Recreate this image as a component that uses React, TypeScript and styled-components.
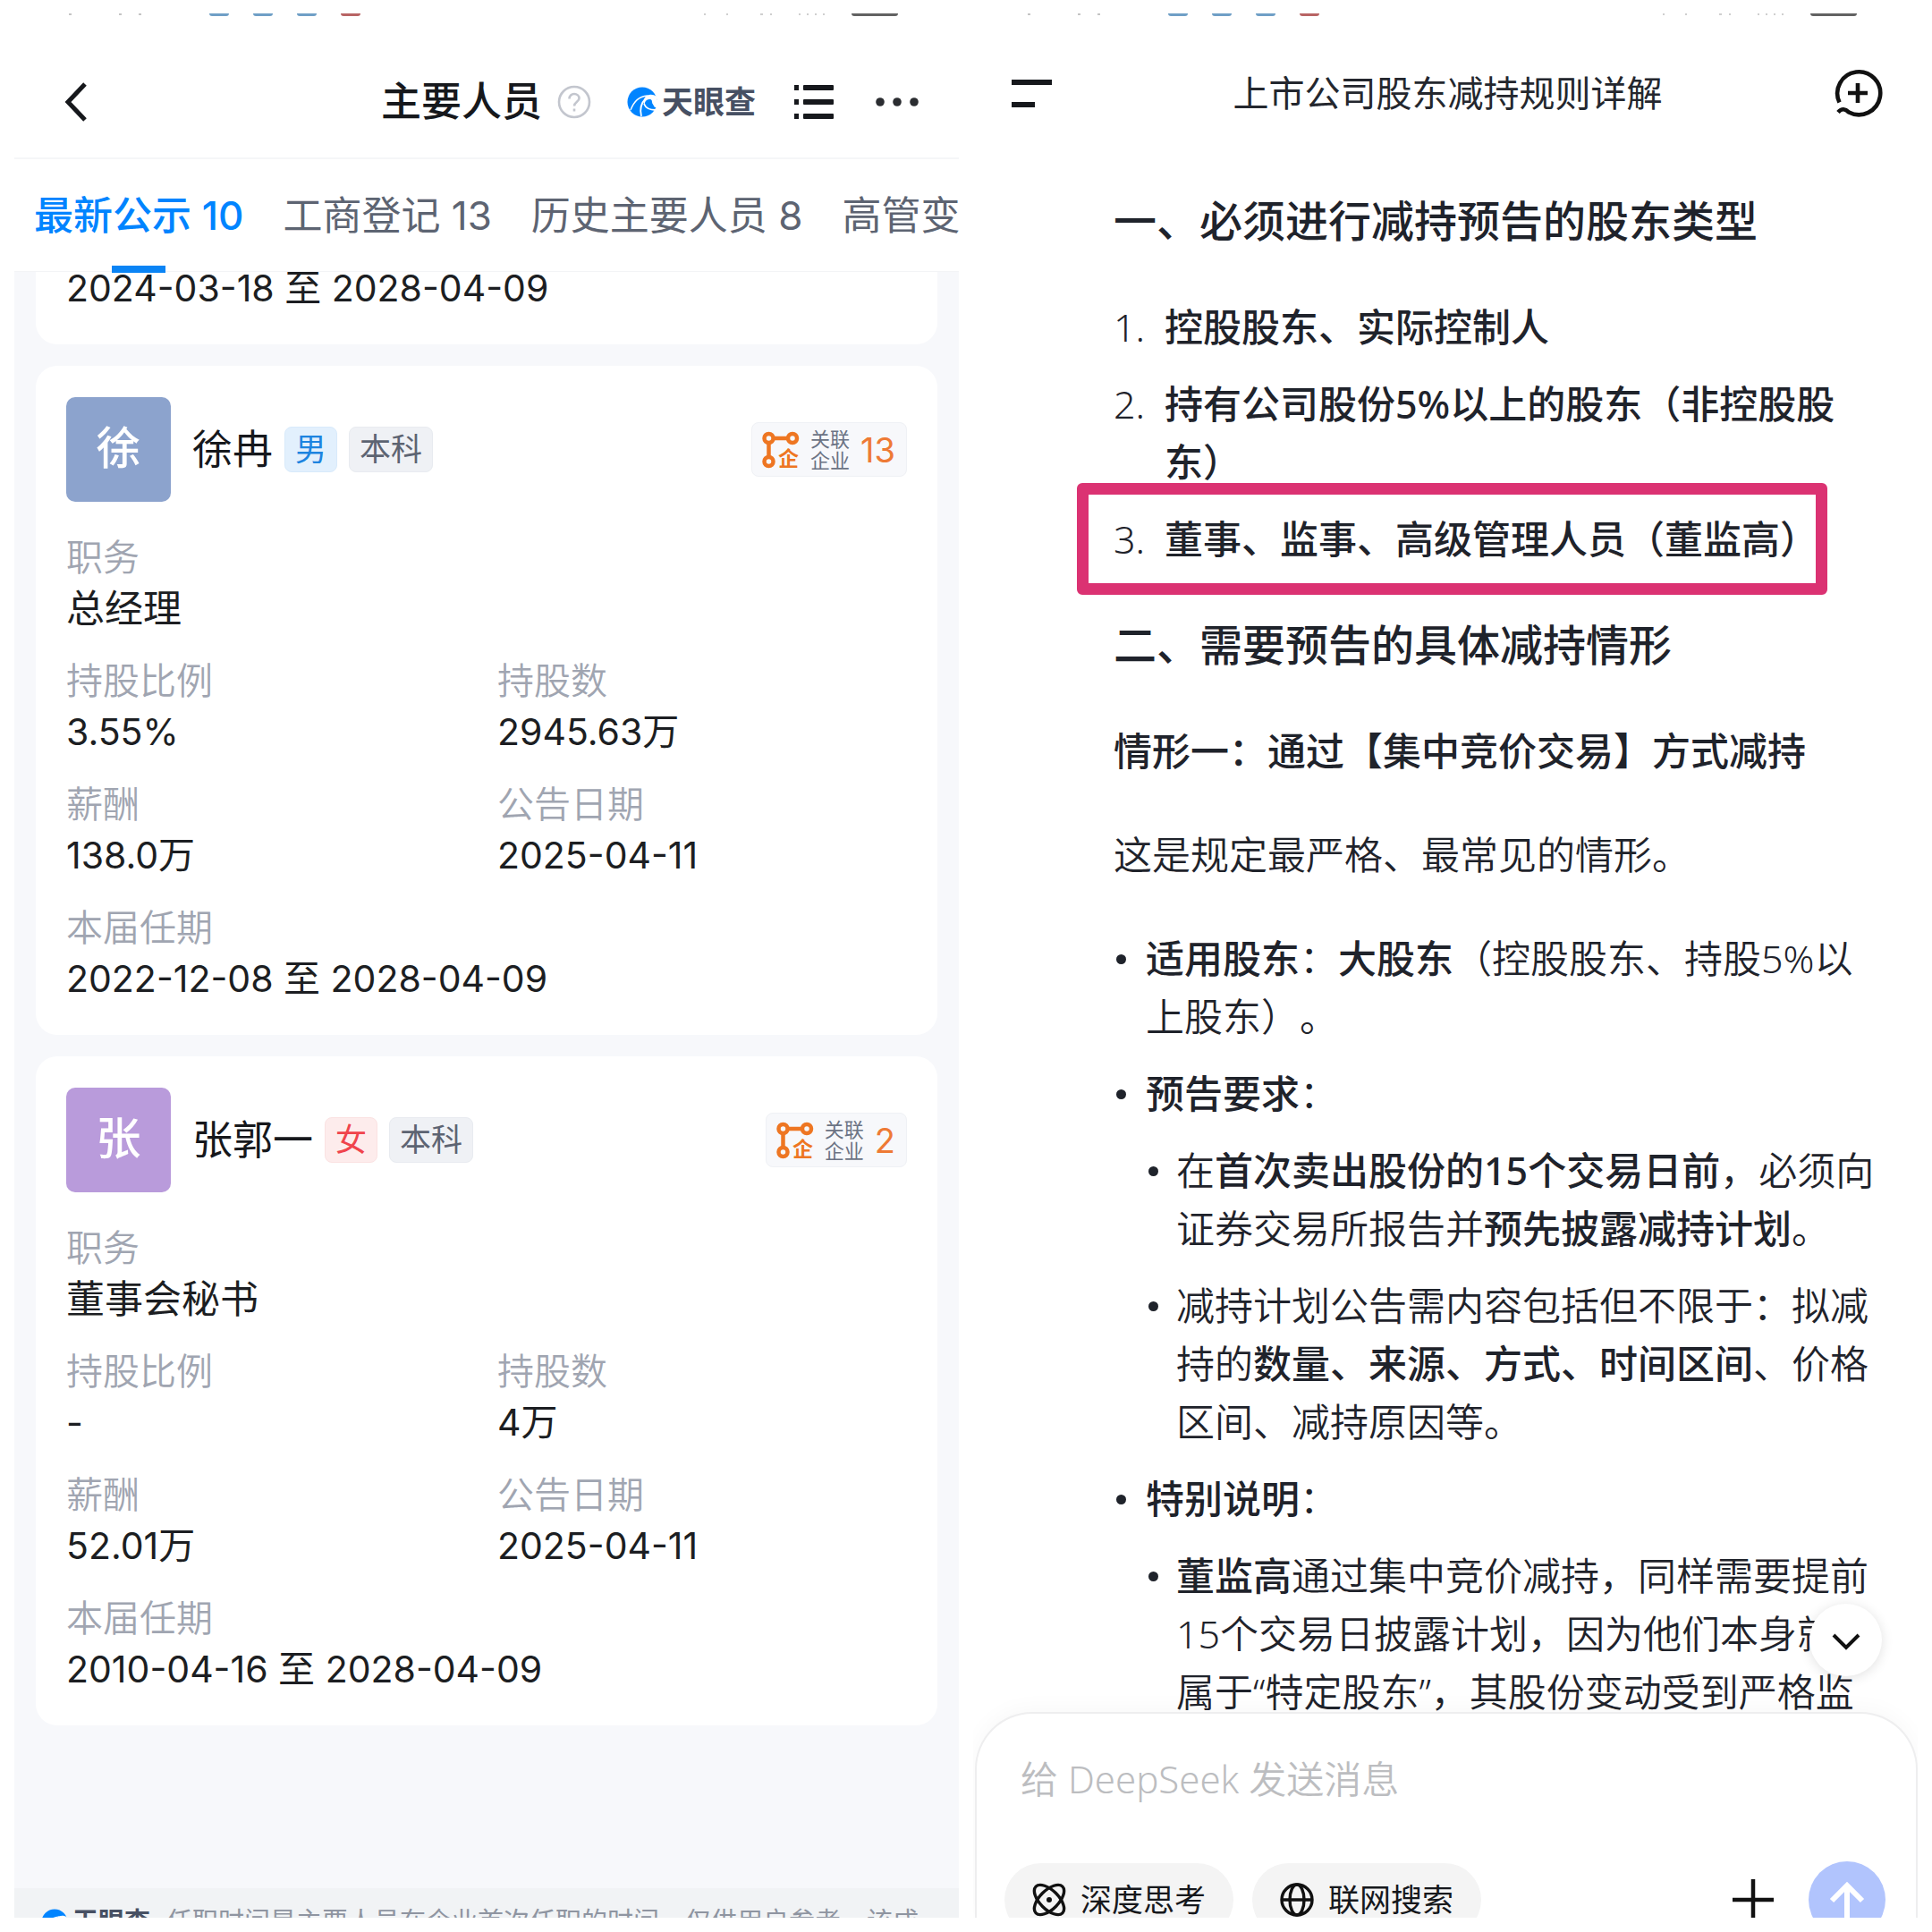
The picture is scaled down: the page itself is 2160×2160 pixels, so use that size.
import React from "react";
import styled, { createGlobalStyle, css } from "styled-components";

const GlobalStyle = createGlobalStyle`
  *, *::before, *::after { box-sizing: border-box; }
  body {
    margin: 0;
    background: #fff;
    color: #16181c;
    font-family: Inter, "Noto Sans CJK SC", "Liberation Sans", sans-serif;
    text-spacing-trim: space-all;
  }
  button, input { font: inherit; color: inherit; }
  button { padding: 0; border: 0; background: none; cursor: pointer; }
  h1, h2, h3, p, ol, ul, dl, dd { margin: 0; padding: 0; }
  ol, ul { list-style: none; }
  svg { display: block; flex: none; }
`;

const Page = styled.div`
  display: grid;
  grid-template-columns: minmax(0, 1fr) minmax(0, 1fr);
  gap: 16px;
  height: 100vh;
  padding: 15px 16px 16px;
`;

const Phone = styled.section`
  display: flex;
  flex-direction: column;
  min-height: 0;
  overflow: hidden;
  background: #fff;
`;

const ChatPhone = styled(Phone)`
  font-family: "Noto Sans", "Noto Sans CJK SC", "Liberation Sans", sans-serif;
`;

/* ---------- status bar ---------- */

const StatusBar = styled.div`
  display: flex;
  justify-content: space-between;
  height: 3px;
  padding: 0 68px 0 60px;
`;

const StatusIcons = styled.div`
  display: flex;
  gap: 27px;
`;

const StatusDash = styled.span<{ $color: string; $width?: number }>`
  width: ${(p) => p.$width ?? 22}px;
  height: 3px;
  border-radius: 0 0 3px 3px;
  background: ${(p) => p.$color};
`;

function PhoneStatus() {
  return (
    <StatusBar aria-hidden="true">
      <StatusIcons>
        <svg width="131" height="3" viewBox="0 0 131 3" fill="#c4c4c4">
          <path d="M1 0H4V2H1ZM57 0H60V2H57ZM79 0H82V2H79Z" />
        </svg>
        <StatusDash $color="#6f9fc6" />
        <StatusDash $color="#6f9fc6" />
        <StatusDash $color="#6f9fc6" />
        <StatusDash $color="#b86464" />
      </StatusIcons>
      <StatusIcons>
        <svg width="138" height="3" viewBox="0 0 138 3" fill="#cfcfcf">
          <path d="M0 0H2V2H0ZM25 0H27V2H25ZM63 0H66V2H63ZM74 0H76V2H74ZM106 0H108V2H106ZM115 0H117V2H115ZM124 0H126V2H124ZM133 0H135V2H133Z" />
        </svg>
        <StatusDash $color="#626262" $width={52} />
      </StatusIcons>
    </StatusBar>
  );
}

/* ---------- company app ---------- */

const CompanyHeader = styled.header`
  display: flex;
  align-items: center;
  height: 160px;
  padding: 34px 44px 0 56px;
  border-bottom: 2px solid #f5f6f8;
`;

const IconButton = styled.button`
  display: flex;
  align-items: center;
  justify-content: center;
  justify-self: start;
`;

const HeaderTitle = styled.h1`
  margin-left: auto;
  font-size: 45px;
  line-height: 60px;
  font-weight: 500;
`;

const HeaderTools = styled.div`
  display: flex;
  align-items: center;
  flex: none;
  width: 422px;
  padding-left: 17px;
`;

const Brand = styled.span<{ $small?: boolean }>`
  display: flex;
  align-items: center;
  gap: 5px;
  color: #475063;
  font-weight: 700;
  font-size: ${(p) => (p.$small ? 29 : 35)}px;
  line-height: 40px;
  margin-left: ${(p) => (p.$small ? 0 : 40)}px;
`;

const ListTool = styled(IconButton)`
  margin-left: 43px;
`;

const MoreTool = styled(IconButton)`
  margin-left: auto;
`;

const Tabs = styled.nav`
  position: relative;
  z-index: 1;
  display: flex;
  gap: 44px;
  height: 126px;
  padding: 0 22px;
  border-bottom: 1px solid #f3f4f6;
  background: #fff;
  white-space: nowrap;
`;

const Tab = styled.button<{ $active?: boolean }>`
  position: relative;
  flex: none;
  font-size: 44px;
  line-height: 60px;
  font-weight: ${(p) => (p.$active ? 500 : 400)};
  color: ${(p) => (p.$active ? "#0084ff" : "#5d6472")};
  ${(p) =>
    p.$active &&
    css`
      &::after {
        content: "";
        position: absolute;
        left: calc(50% - 30px);
        bottom: -2px;
        width: 60px;
        height: 8px;
        background: #0a84f5;
      }
    `}
`;

const PeopleList = styled.main`
  flex: 1;
  min-height: 0;
  display: flex;
  flex-direction: column;
  gap: 24px;
  padding: 0 24px;
  background: #f7f8fb;
`;

const Card = styled.article`
  flex: none;
  padding: 35px 34px 34px;
  border-radius: 24px;
  background: #fff;
`;

const ScrolledCard = styled(Card)`
  display: flex;
  align-items: flex-end;
  height: 81px;
  padding-top: 0;
  border-radius: 0 0 24px 24px;
`;

const PersonHead = styled.header`
  display: flex;
  align-items: center;
  gap: 13px;
  margin-bottom: 34px;
`;

const Avatar = styled.span<{ $color: string }>`
  width: 117px;
  height: 117px;
  margin-right: 11px;
  border-radius: 10px;
  background: ${(p) => p.$color};
  color: #fff;
  font-size: 50px;
  line-height: 114px;
  font-weight: 500;
  text-align: center;
`;

const PersonName = styled.h2`
  font-size: 45px;
  line-height: 60px;
  font-weight: 400;
`;

const tagTone = {
  blue: css`
    color: #1d84e0;
    background: #e2f0fd;
    border-color: #d8eafb;
  `,
  red: css`
    color: #f0444c;
    background: #fdecec;
    border-color: #fbe2e2;
  `,
  gray: css`
    color: #5d6472;
    background: #eff1f5;
    border-color: #e8ebf0;
  `,
};

const Tag = styled.span<{ $tone: keyof typeof tagTone }>`
  padding: 0 11px;
  border: 1px solid;
  border-radius: 8px;
  font-size: 35px;
  line-height: 49px;
  ${(p) => tagTone[p.$tone]}
`;

const Related = styled.button`
  display: flex;
  align-items: center;
  gap: 12px;
  height: 61px;
  margin-left: auto;
  padding: 0 12px 0 11px;
  border: 1px solid #eff1f5;
  border-radius: 8px;
  background: #f7f8fb;
`;

const RelatedLabel = styled.span`
  width: 44px;
  font-size: 22px;
  line-height: 24px;
  color: #6b7384;
  text-align: left;
`;

const RelatedCount = styled.span`
  font-size: 38px;
  line-height: 40px;
  color: #ee7a35;
`;

const Fields = styled.dl`
  display: grid;
  grid-template-columns: 1fr 1fr;
  gap: 24px;
`;

const Field = styled.div<{ $wide?: boolean }>`
  grid-column: ${(p) => (p.$wide ? "1 / -1" : "auto")};
`;

const FieldLabel = styled.dt`
  font-size: 41px;
  line-height: 57px;
  font-weight: 350;
  color: #a0a5b1;
`;

const FieldValue = styled.dd<{ $text?: boolean }>`
  font-size: ${(p) => (p.$text ? 43 : 41)}px;
  line-height: 57px;
  color: #1c1e22;
`;

const ScrolledValue = styled.p`
  font-size: 41px;
  line-height: 57px;
  color: #1c1e22;
`;

const Disclaimer = styled.footer`
  display: flex;
  flex: none;
  align-items: flex-start;
  gap: 18px;
  height: 33px;
  padding: 18px 30px 0;
  overflow: hidden;
  background: #f1f3f5;
  white-space: nowrap;
`;

const DisclaimerText = styled.p`
  font-size: 29px;
  line-height: 40px;
  color: #8f95a1;
`;

function SwirlLogo({ size }: { size: number }) {
  return (
    <svg width={size} height={size} viewBox="0 0 34 34" aria-hidden="true">
      <circle cx="17" cy="17" r="16.5" fill="#0084ff" />
      <path d="M33 11C29 8 23 8 20 12C18 15 18 19 20 22C19 18 21 14 25 14C28 14 28 16 28 18C31 17 33 17 34 18Z" fill="#fff" />
      <path d="M4 26C8 16 13 11 23 10" fill="none" stroke="#fff" strokeWidth="1.4" />
      <path d="M16 33C14 25 16 18 21 13" fill="none" stroke="#fff" strokeWidth="1.8" />
      <path d="M19 19C21 24 25 26 32 26" fill="none" stroke="#fff" strokeWidth="1.8" />
      <path d="M28 18L35 14V23H31Z" fill="#fff" />
    </svg>
  );
}

function RelationIcon() {
  return (
    <svg width="42" height="42" viewBox="0 0 42 42" aria-hidden="true">
      <g fill="none" stroke="#ee7622" strokeWidth="4.5">
        <circle cx="7.500" cy="8" r="5" />
        <circle cx="34" cy="8" r="5" />
        <circle cx="7.500" cy="34" r="5" />
        <path d="M13 8H29M7.500 13V29" />
      </g>
      <text x="18" y="39" fontSize="23" fontWeight="700" fill="#ee7622">企</text>
    </svg>
  );
}

type Person = {
  name: string;
  color: string;
  sex: string;
  degree: string;
  related: string;
  job: string;
  ratio: string;
  shares: string;
  salary: string;
  date: string;
  term: string;
};

const people: Person[] = [
  {
    name: "徐冉", color: "#8ca3cd", sex: "男", degree: "本科", related: "13", job: "总经理",
    ratio: "3.55%", shares: "2945.63万", salary: "138.0万", date: "2025-04-11", term: "2022-12-08 至 2028-04-09",
  },
  {
    name: "张郭一", color: "#b99bdb", sex: "女", degree: "本科", related: "2", job: "董事会秘书",
    ratio: "-", shares: "4万", salary: "52.01万", date: "2025-04-11", term: "2010-04-16 至 2028-04-09",
  },
];

function PersonCard({ person }: { person: Person }) {
  return (
    <Card>
      <PersonHead>
        <Avatar $color={person.color}>{person.name[0]}</Avatar>
        <PersonName>{person.name}</PersonName>
        <Tag $tone={person.sex === "男" ? "blue" : "red"}>{person.sex}</Tag>
        <Tag $tone="gray">{person.degree}</Tag>
        <Related type="button">
          <RelationIcon />
          <RelatedLabel>关联企业</RelatedLabel>
          <RelatedCount>{person.related}</RelatedCount>
        </Related>
      </PersonHead>
      <Fields>
        <Field $wide>
          <FieldLabel>职务</FieldLabel>
          <FieldValue $text>{person.job}</FieldValue>
        </Field>
        <Field>
          <FieldLabel>持股比例</FieldLabel>
          <FieldValue>{person.ratio}</FieldValue>
        </Field>
        <Field>
          <FieldLabel>持股数</FieldLabel>
          <FieldValue>{person.shares}</FieldValue>
        </Field>
        <Field>
          <FieldLabel>薪酬</FieldLabel>
          <FieldValue>{person.salary}</FieldValue>
        </Field>
        <Field>
          <FieldLabel>公告日期</FieldLabel>
          <FieldValue>{person.date}</FieldValue>
        </Field>
        <Field $wide>
          <FieldLabel>本届任期</FieldLabel>
          <FieldValue>{person.term}</FieldValue>
        </Field>
      </Fields>
    </Card>
  );
}

function CompanyApp() {
  return (
    <Phone>
      <PhoneStatus />
      <CompanyHeader>
        <IconButton type="button" aria-label="返回">
          <svg width="26" height="46" viewBox="0 0 26 46" fill="none" stroke="#16181c" strokeWidth="5">
            <path d="M23 3L4 23L23 43" />
          </svg>
        </IconButton>
        <HeaderTitle>主要人员</HeaderTitle>
        <HeaderTools>
          <IconButton type="button" aria-label="说明">
            <svg width="38" height="38" viewBox="0 0 38 38" fill="none" stroke="#c3c6ce" strokeWidth="2.6">
              <circle cx="19" cy="19" r="17" />
              <path d="M13.5 15.5C13.5 12 16 10 19 10S24.500 12 24.500 15C24.500 18.500 19 19 19 23.500" />
              <path d="M19 26.500V29.500" />
            </svg>
          </IconButton>
          <Brand>
            <SwirlLogo size={34} />
            天眼查
          </Brand>
          <ListTool type="button" aria-label="目录">
            <svg width="44" height="40" viewBox="0 0 44 40" fill="#16181c">
              <path d="M0 1H5V7H0ZM0 17H5V23H0ZM0 33H5V39H0Z" />
              <rect x="10" y="1" width="34" height="6" rx="1" />
              <rect x="10" y="17" width="34" height="6" rx="1" />
              <rect x="10" y="33" width="34" height="6" rx="1" />
            </svg>
          </ListTool>
          <MoreTool type="button" aria-label="更多">
            <svg width="50" height="12" viewBox="0 0 50 12" fill="#2b2d31">
              <circle cx="6" cy="6" r="4.800" />
              <circle cx="25" cy="6" r="4.800" />
              <circle cx="44" cy="6" r="4.800" />
            </svg>
          </MoreTool>
        </HeaderTools>
      </CompanyHeader>
      <Tabs>
        <Tab type="button" $active>最新公示 10</Tab>
        <Tab type="button">工商登记 13</Tab>
        <Tab type="button">历史主要人员 8</Tab>
        <Tab type="button">高管变更</Tab>
      </Tabs>
      <PeopleList>
        <ScrolledCard>
          <ScrolledValue>2024-03-18 至 2028-04-09</ScrolledValue>
        </ScrolledCard>
        {people.map((person) => (
          <PersonCard key={person.name} person={person} />
        ))}
      </PeopleList>
      <Disclaimer>
        <Brand $small>
          <SwirlLogo size={30} />
          天眼查
        </Brand>
        <DisclaimerText>任职时间是主要人员在企业首次任职的时间，仅供用户参考，该成</DisclaimerText>
      </Disclaimer>
    </Phone>
  );
}

/* ---------- chat app ---------- */

const ChatHeader = styled.header`
  display: grid;
  grid-template-columns: minmax(0, 1fr) auto minmax(0, 1fr);
  align-items: center;
  height: 142px;
  padding: 30px 38px 0 43px;
`;

const ChatTitle = styled.h1`
  font-size: 40px;
  line-height: 60px;
  font-weight: 400;
  color: #24272e;
`;

const NewChat = styled(IconButton)`
  justify-self: end;
`;

const ChatBody = styled.main`
  position: relative;
  display: flex;
  flex: 1;
  min-height: 0;
`;

const Answer = styled.article`
  display: flex;
  flex: 1;
  flex-direction: column;
  gap: 51px;
  padding: 52px 44px 0 157px;
  overflow: hidden;
  font-size: 43px;
  line-height: 65px;
  font-weight: 350;
  color: #1f232b;
  strong { font-weight: 500; }
`;

const SectionTitle = styled.h2`
  font-size: 48px;
  line-height: 70px;
  font-weight: 500;
`;

const CaseTitle = styled.h3`
  font-size: 43px;
  line-height: 65px;
  font-weight: 500;
`;

const Numbered = styled.ol`
  display: flex;
  flex-direction: column;
  gap: 21px;
  counter-reset: rule;
`;

const NumberedItem = styled.li<{ $marked?: boolean }>`
  position: relative;
  display: grid;
  grid-template-columns: 57px 1fr;
  counter-increment: rule;
  &::before { content: counter(rule) "."; }
  ${(p) =>
    p.$marked &&
    css`
      &::after {
        content: "";
        position: absolute;
        inset: -30px 57px -30px -41px;
        border: 13px solid #db3272;
        border-radius: 6px;
      }
    `}
`;

const Bullets = styled.ul`
  display: flex;
  flex-direction: column;
  gap: 21px;
`;

const Bullet = styled.li<{ $nested?: boolean }>`
  display: grid;
  grid-template-columns: ${(p) => (p.$nested ? 34 : 36)}px 1fr;
  row-gap: 21px;
  &::before {
    content: "";
    width: 11px;
    height: 11px;
    margin: 28px 0 0 3px;
    border-radius: 50%;
    background: #1f232b;
  }
  > ul { grid-column: 2; }
`;

const ScrollDown = styled.button`
  position: absolute;
  right: 40px;
  bottom: 40px;
  display: flex;
  align-items: center;
  justify-content: center;
  width: 81px;
  height: 81px;
  padding-top: 4px;
  border-radius: 50%;
  background: #fff;
  box-shadow: 0 2px 14px rgba(0, 0, 0, 0.12);
`;

const Composer = styled.form`
  position: relative;
  flex: none;
  height: 230px;
  margin-left: 2px;
  padding: 42px 34px 0 31px;
  border: 2px solid #eeeeef;
  border-bottom: 0;
  border-radius: 64px 64px 0 0;
  background: #fff;
  box-shadow: 0 -4px 24px rgba(0, 0, 0, 0.03);
`;

const MessageInput = styled.input`
  display: block;
  width: 100%;
  height: 60px;
  padding: 0 18px;
  border: 0;
  outline: 0;
  background: transparent;
  font-size: 42px;
  &::placeholder { color: #bcbdc0; opacity: 1; font-weight: 350; }
`;

const ComposerTools = styled.div`
  display: flex;
  align-items: center;
  gap: 21px;
  height: 86px;
  margin-top: 63px;
`;

const Chip = styled.button`
  display: flex;
  align-items: center;
  gap: 16px;
  height: 82px;
  padding: 0 31px;
  border-radius: 41px;
  background: #f4f4f4;
  font-size: 35px;
  line-height: 50px;
`;

const AddButton = styled(IconButton)`
  margin-left: auto;
`;

const SendButton = styled(IconButton)`
  width: 86px;
  height: 86px;
  margin-left: 18px;
  border-radius: 50%;
  background: #b1c4fd;
`;

function ChatApp() {
  return (
    <ChatPhone>
      <PhoneStatus />
      <ChatHeader>
        <IconButton type="button" aria-label="菜单">
          <svg width="46" height="34" viewBox="0 0 46 34" fill="#16181c">
            <rect y="2" width="45" height="6" />
            <rect y="27" width="26" height="6" />
          </svg>
        </IconButton>
        <ChatTitle>上市公司股东减持规则详解</ChatTitle>
        <NewChat type="button" aria-label="新对话">
          <svg width="58" height="58" viewBox="0 0 58 58" fill="none" stroke="#111" strokeWidth="4.600">
            <path d="M8.500 39.500A24 24 0 1 1 19 50.500C15 46.500 11 46 7 50.500" />
            <path d="M29 18V40M18 29H40" />
          </svg>
        </NewChat>
      </ChatHeader>
      <ChatBody>
        <Answer>
          <SectionTitle>一、必须进行减持预告的股东类型</SectionTitle>
          <Numbered>
            <NumberedItem><strong>控股股东、实际控制人</strong></NumberedItem>
            <NumberedItem><strong>持有公司股份5%以上的股东（非控股股东）</strong></NumberedItem>
            <NumberedItem $marked><strong>董事、监事、高级管理人员（董监高）</strong></NumberedItem>
          </Numbered>
          <SectionTitle>二、需要预告的具体减持情形</SectionTitle>
          <CaseTitle>情形一：通过【集中竞价交易】方式减持</CaseTitle>
          <p>这是规定最严格、最常见的情形。</p>
          <Bullets>
            <Bullet>
              <p><strong>适用股东</strong>：<strong>大股东</strong>（控股股东、持股5%以上股东）。</p>
            </Bullet>
            <Bullet>
              <p><strong>预告要求</strong>：</p>
              <Bullets>
                <Bullet $nested>
                  <p>在<strong>首次卖出股份的15个交易日前</strong>，必须向证券交易所报告并<strong>预先披露减持计划</strong>。</p>
                </Bullet>
                <Bullet $nested>
                  <p>减持计划公告需内容包括但不限于：拟减持的<strong>数量、来源、方式、时间区间</strong>、价格区间、减持原因等。</p>
                </Bullet>
              </Bullets>
            </Bullet>
            <Bullet>
              <p><strong>特别说明</strong>：</p>
              <Bullets>
                <Bullet $nested>
                  <p><strong>董监高</strong>通过集中竞价减持，同样需要提前15个交易日披露计划，因为他们本身就<br />属于“特定股东”，其股份变动受到严格监</p>
                </Bullet>
              </Bullets>
            </Bullet>
          </Bullets>
        </Answer>
        <ScrollDown type="button" aria-label="滚动到底部">
          <svg width="34" height="22" viewBox="0 0 34 22" fill="none" stroke="#111" strokeWidth="4">
            <path d="M3 3L17 17L31 3" />
          </svg>
        </ScrollDown>
      </ChatBody>
      <Composer>
        <MessageInput aria-label="消息" placeholder="给 DeepSeek 发送消息" />
        <ComposerTools>
          <Chip type="button">
            <svg width="38" height="38" viewBox="0 0 38 38" fill="none" stroke="#111" strokeWidth="3.4">
              <ellipse cx="19" cy="19" rx="21" ry="10.500" transform="rotate(45 19 19)" />
              <ellipse cx="19" cy="19" rx="21" ry="10.500" transform="rotate(-45 19 19)" />
              <circle cx="19" cy="19" r="3" fill="#111" stroke="none" />
            </svg>
            深度思考
          </Chip>
          <Chip type="button">
            <svg width="38" height="38" viewBox="0 0 38 38" fill="none" stroke="#111" strokeWidth="3.4">
              <circle cx="19" cy="19" r="17" />
              <ellipse cx="19" cy="19" rx="8" ry="17" />
              <path d="M2 19H36" />
            </svg>
            联网搜索
          </Chip>
          <AddButton type="button" aria-label="添加附件">
            <svg width="46" height="46" viewBox="0 0 46 46" fill="none" stroke="#111" strokeWidth="4.500">
              <path d="M23 0V46M0 23H46" />
            </svg>
          </AddButton>
          <SendButton type="button" aria-label="发送">
            <svg width="86" height="86" viewBox="0 0 86 86" fill="none" stroke="#fff" strokeWidth="6">
              <path d="M43 65V27M26 44L43 27L60 44" />
            </svg>
          </SendButton>
        </ComposerTools>
      </Composer>
    </ChatPhone>
  );
}

export default function App() {
  return (
    <>
      <GlobalStyle />
      <Page>
        <CompanyApp />
        <ChatApp />
      </Page>
    </>
  );
}
